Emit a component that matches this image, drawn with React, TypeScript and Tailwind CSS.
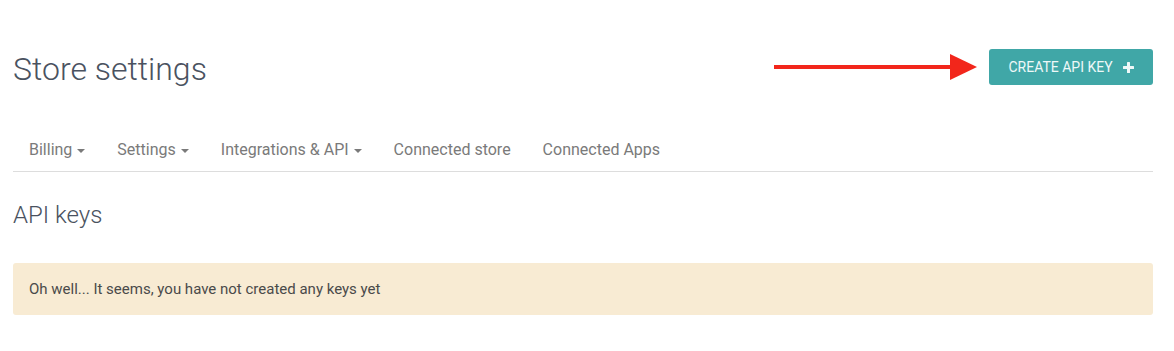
import React from "react"

const TABS: { label: string; dropdown?: boolean }[] = [
  { label: "Billing", dropdown: true },
  { label: "Settings", dropdown: true },
  { label: "Integrations & API", dropdown: true },
  { label: "Connected store" },
  { label: "Connected Apps" },
]

function Caret() {
  return (
    <svg width="8" height="4" viewBox="0 0 8 4" className="ml-[5px] mt-[2px]">
      <path d="M0 0h8L4 4z" fill="currentColor" />
    </svg>
  )
}

function Arrow() {
  return (
    <svg width="203" height="26" viewBox="0 0 203 26">
      <rect x="0" y="11" width="180" height="4" fill="#f2261b" />
      <path d="M176 0L203 13L176 26z" fill="#f2261b" />
    </svg>
  )
}

function PlusIcon() {
  return (
    <svg width="11" height="11" viewBox="0 0 11 11" className="ml-[10px]">
      <rect x="4" y="0" width="3" height="11" rx="0.5" fill="currentColor" />
      <rect x="0" y="4" width="11" height="3" rx="0.5" fill="currentColor" />
    </svg>
  )
}

export default function App() {
  return (
    <div className="h-[351px] overflow-hidden bg-white font-['Roboto',sans-serif]">
      <div className="ml-[13px] w-[1140px] pt-[49px]">
        {/* header */}
        <div className="h-[36px] flex items-center justify-between">
          <h1 className="text-[32px] leading-[34px] font-light text-[#4a5260] pt-[3px]">Store settings</h1>
          <div className="flex items-center gap-[12px]">
            <Arrow />
            <button className="h-[36px] w-[164px] rounded-[3px] bg-[#40a7a7] text-[#eef8f8] text-[14px] flex items-center justify-center uppercase">
              Create API key
              <PlusIcon />
            </button>
          </div>
        </div>

        {/* tabs */}
        <ul className="mt-[44px] flex border-b border-[#dddddd]">
          {TABS.map((t) => (
            <li
              key={t.label}
              className="px-[16px] py-[10px] text-[16px] leading-[22px] text-[#7a7a7a] flex items-center cursor-pointer"
            >
              {t.label}
              {t.dropdown && <Caret />}
            </li>
          ))}
        </ul>

        <h2 className="mt-[30px] text-[24px] leading-[26px] font-light text-[#4a5260]">API keys</h2>

        <div className="mt-[35px] rounded-[3px] bg-[#f8ebd3] px-[16px] py-[15px] text-[15px] leading-[22px] text-[#4a4a4a]">
          Oh well... It seems, you have not created any keys yet
        </div>
      </div>
    </div>
  )
}
